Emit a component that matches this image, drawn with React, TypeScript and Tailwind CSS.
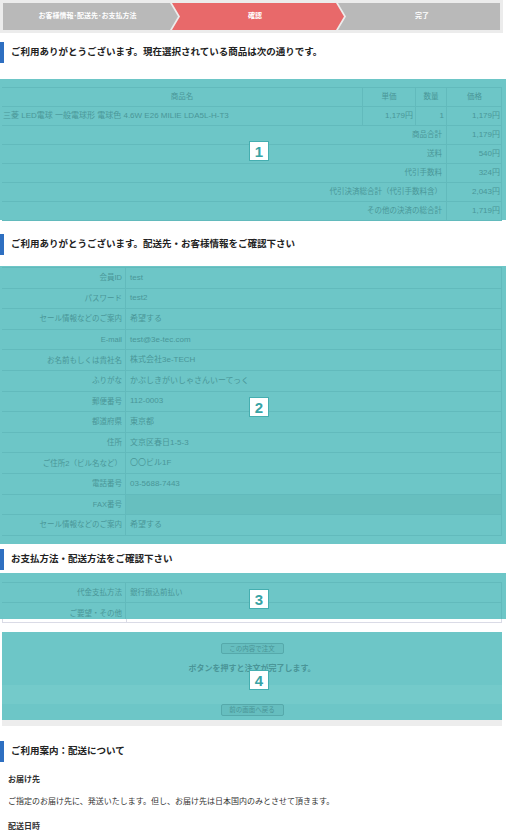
import type { ReactNode } from 'react';

const FONT = "font-['Liberation_Sans','Noto_Sans_CJK_JP',sans-serif]";

const items = {
  name: '三菱 LED電球 一般電球形 電球色 4.6W E26 MILIE LDA5L-H-T3',
  unit: '1,179円',
  qty: '1',
  price: '1,179円',
};

const totals = [
  { label: '商品合計', value: '1,179円' },
  { label: '送料', value: '540円' },
  { label: '代引手数料', value: '324円' },
  { label: '代引決済総合計（代引手数料含）', value: '2,043円' },
  { label: 'その他の決済の総合計', value: '1,719円' },
];

const customer = [
  { label: '会員ID', value: 'test' },
  { label: 'パスワード', value: 'test2' },
  { label: 'セール情報などのご案内', value: '希望する' },
  { label: 'E-mail', value: 'test@3e-tec.com' },
  { label: 'お名前もしくは貴社名', value: '株式会社3e-TECH' },
  { label: 'ふりがな', value: 'かぶしきがいしゃさんいーてっく' },
  { label: '郵便番号', value: '112-0003' },
  { label: '都道府県', value: '東京都' },
  { label: '住所', value: '文京区春日1-5-3' },
  { label: 'ご住所2（ビル名など）', value: '〇〇ビル1F' },
  { label: '電話番号', value: '03-5688-7443' },
  { label: 'FAX番号', value: '' },
  { label: 'セール情報などのご案内', value: '希望する' },
];

function Heading({ children }: { children: ReactNode }) {
  return (
    <div className="flex h-[21px] items-center border-l-[4px] border-[#2e6fc1] pl-[7px] text-[9.5px] font-bold text-[#222]">
      {children}
    </div>
  );
}

function Badge({ n, top }: { n: number; top: string }) {
  return (
    <div
      className={`absolute left-[249px] ${top} flex h-[20px] w-[20px] items-center justify-center border border-[#45aeb0] bg-white text-[15px] font-bold leading-none text-[#38a3a5]`}
    >
      {n}
    </div>
  );
}

function Steps() {
  return (
    <div className="w-[503px] bg-[#ececec] p-[3px]">
      <div className="flex h-[27px] text-[7px] font-bold text-white">
        <div className="flex w-[175px] items-center justify-center bg-[#b9b9b9] pr-[6px] [clip-path:polygon(0_0,calc(100%_-_8px)_0,100%_50%,calc(100%_-_8px)_100%,0_100%)]">
          お客様情報･配送先･お支払方法
        </div>
        <div className="ml-[-6px] flex w-[172px] items-center justify-center bg-[#e8696a] pr-[6px] [clip-path:polygon(0_0,calc(100%_-_8px)_0,100%_50%,calc(100%_-_8px)_100%,0_100%,8px_50%)]">
          確認
        </div>
        <div className="ml-[-6px] flex flex-1 items-center justify-center bg-[#b9b9b9] pl-[6px] [clip-path:polygon(0_0,100%_0,100%_100%,0_100%,8px_50%)]">
          完了
        </div>
      </div>
    </div>
  );
}

export default function App() {
  return (
    <div className={`w-[506px] bg-white ${FONT}`}>
      <Steps />

      <div className="mt-[9px]">
        <Heading>ご利用ありがとうございます。現在選択されている商品は次の通りです。</Heading>
      </div>

      {/* 1: 商品 */}
      <div className="relative mt-[16px] h-[141px] bg-[#6dc6c7] pt-[8px] text-[7.5px] text-[#4a9698]">
        <div className="ml-[2px] w-[500px] border-r border-t border-[#62babc]">
          <div className="grid h-[19px] grid-cols-[361px_53px_31px_55px] border-b border-[#62babc]">
            <div className="flex items-center justify-center border-r border-[#62babc]">商品名</div>
            <div className="flex items-center justify-center border-r border-[#62babc]">単価</div>
            <div className="flex items-center justify-center border-r border-[#62babc]">数量</div>
            <div className="flex items-center justify-center">価格</div>
          </div>
          <div className="grid h-[19px] grid-cols-[361px_53px_31px_55px] border-b border-[#62babc]">
            <div className="flex items-center border-r border-[#62babc] pl-[1px] text-[8px]">{items.name}</div>
            <div className="flex items-center justify-end border-r border-[#62babc] pr-[2px] text-[8px]">{items.unit}</div>
            <div className="flex items-center justify-end border-r border-[#62babc] pr-[2px] text-[8px]">{items.qty}</div>
            <div className="flex items-center justify-end pr-[2px] text-[8px]">{items.price}</div>
          </div>
          {totals.map((t) => (
            <div key={t.label} className="grid h-[19px] grid-cols-[445px_55px] border-b border-[#62babc]">
              <div className="flex items-center justify-end border-r border-[#62babc] pr-[4px]">{t.label}</div>
              <div className="flex items-center justify-end pr-[2px] text-[8px]">{t.value}</div>
            </div>
          ))}
        </div>
        <Badge n={1} top="top-[62px]" />
      </div>

      <div className="mt-[14px]">
        <Heading>ご利用ありがとうございます。配送先・お客様情報をご確認下さい</Heading>
      </div>

      {/* 2: お客様情報 */}
      <div className="relative mt-[11px] h-[278px] bg-[#6dc6c7] pt-[1px] text-[7.5px] text-[#4a9698]">
        <div className="ml-[2px] w-[500px] border-r border-t border-[#62babc]">
          {customer.map((c, i) => (
            <div key={i} className="grid h-[20.6px] grid-cols-[124px_1fr] border-b border-[#62babc]">
              <div className="flex items-center justify-end border-r border-[#62babc] pr-[3px]">{c.label}</div>
              <div
                className={`flex items-center pl-[4px] text-[8px] ${c.label === 'FAX番号' ? 'bg-[#67bfbf]' : ''}`}
              >
                {c.value}
              </div>
            </div>
          ))}
        </div>
        <Badge n={2} top="top-[131px]" />
      </div>

      <div className="mt-[5px]">
        <Heading>お支払方法・配送方法をご確認下さい</Heading>
      </div>

      {/* 3: お支払方法 */}
      <div className="relative mt-[3px] h-[50px]">
        <div className="h-[46px] overflow-hidden bg-[#6dc6c7] pt-[9px] text-[7.5px] text-[#4a9698]">
          <div className="ml-[2px] w-[500px] border-r border-t border-[#62babc]">
            <div className="grid h-[20px] grid-cols-[124px_1fr] border-b border-[#62babc]">
              <div className="flex items-center justify-end border-r border-[#62babc] pr-[3px]">代金支払方法</div>
              <div className="flex items-center pl-[4px]">銀行振込前払い</div>
            </div>
            <div className="grid h-[21px] grid-cols-[124px_1fr]">
              <div className="flex items-center justify-end border-r border-[#62babc] pr-[3px]">ご要望・その他</div>
              <div />
            </div>
          </div>
        </div>
        <div className="ml-[2px] grid h-[4px] w-[500px] grid-cols-[124px_1fr] border-x border-b border-[#dadbe6]">
          <div className="border-r border-[#dadbe6]" />
          <div />
        </div>
        <Badge n={3} top="top-[16px]" />
      </div>

      {/* 4: 注文ボタン */}
      <div className="relative mt-[9px]">
        <div className="ml-[2px] flex h-[88px] w-[500px] flex-col items-center overflow-hidden bg-[#6dc6c7] pt-[11px] text-[#4a9597]">
          <div className="flex h-[11px] w-[63px] items-center justify-center rounded-[2px] border border-[#56a9ab] bg-[#66bebf] text-[6.5px]">
            この内容で注文
          </div>
          <div className="mt-[9px] text-[8px] font-bold">ボタンを押すと注文が完了します。</div>
          <div className="mt-[10px] h-[19px] w-full bg-[#74caca]" />
          <div className="flex h-[12px] w-[63px] shrink-0 items-center justify-center rounded-[2px] border border-[#56a9ab] bg-[#66bebf] text-[6.5px]">
            前の画面へ戻る
          </div>
        </div>
        <div className="ml-[2px] h-[6px] w-[500px] bg-[#ededed]" />
        <Badge n={4} top="top-[38px]" />
      </div>

      <div className="mt-[15px]">
        <Heading>ご利用案内：配送について</Heading>
      </div>

      <div className="pl-[8px] text-[8px] text-[#333]">
        <p className="mt-[12px] font-bold leading-[12px]">お届け先</p>
        <p className="mt-[10px] leading-[12px]">
          ご指定のお届け先に、発送いたします。但し、お届け先は日本国内のみとさせて頂きます。
        </p>
        <p className="mt-[13px] font-bold leading-[12px]">配送日時</p>
      </div>
    </div>
  );
}
